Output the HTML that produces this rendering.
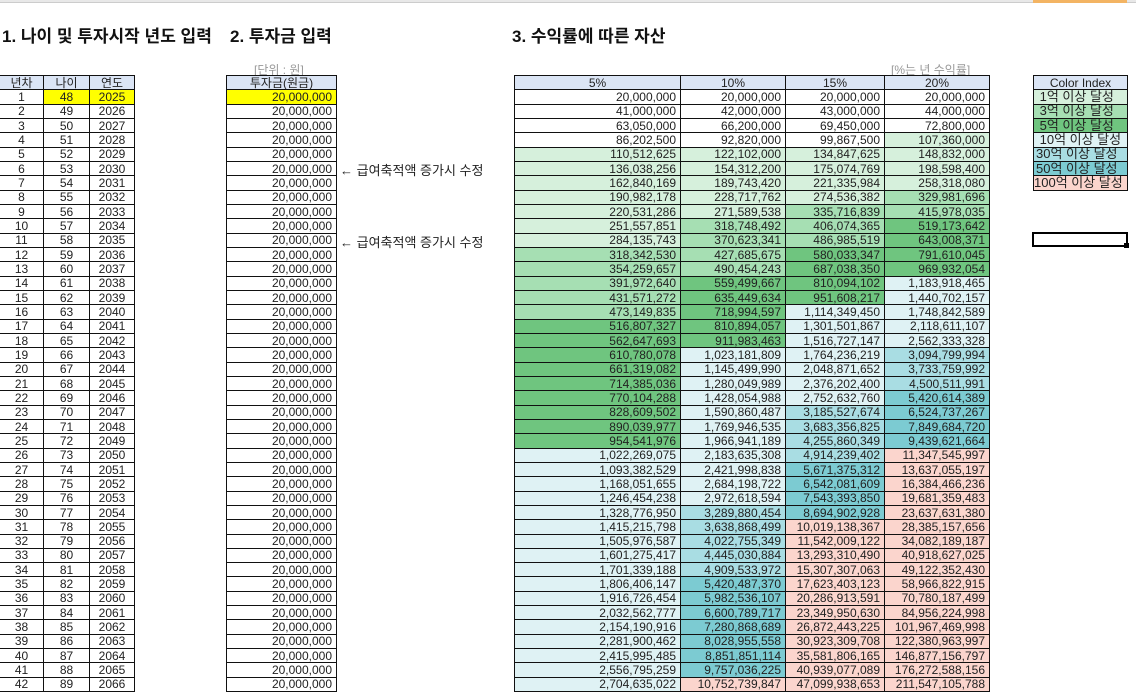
<!DOCTYPE html>
<html><head><meta charset="utf-8"><style>
*{margin:0;padding:0;box-sizing:border-box}
body{width:1136px;height:696px;overflow:hidden;background:#fff;position:relative;font-family:"Liberation Sans","Noto Sans CJK KR","NanumGothic",sans-serif;color:#222}
.t{position:absolute;font-weight:bold;font-size:17px;top:22px;color:#111}
table{position:absolute;border-collapse:collapse;table-layout:fixed;font-size:12px;top:75px}
td{border:1px solid #111;height:14.33px;line-height:12px;padding:0 4px;white-space:nowrap;overflow:hidden;text-align:right}
th{border:1px solid #111;height:14.33px;line-height:12px;font-weight:normal;background:#dbe5f5;text-align:center;padding:0}
.c0 td{text-align:center}
.y{background:#ffff00}
.a{background:#d6f0dc}.b{background:#a6dfb3}.c{background:#6fc57f}
.d{background:#dff2f4}.e{background:#a9dde3}.f{background:#7ccbd2}.r{background:#fbd5cd}
.gray{position:absolute;color:#999;font-size:12px}
.note{position:absolute;left:340px;font-size:13px}
.sel{position:absolute;left:1032px;top:232px;width:96px;height:15px;border:2px solid #000}
.ci td{text-align:left;padding:0 2px;font-size:13px}
.top{position:absolute;top:0;left:0;width:1136px;height:3px;background:#e8e8e8;border-bottom:1px solid #ccc}
</style></head><body>
<div class="top"></div>
<div style="position:absolute;top:0;left:1033px;width:94px;height:3px;background:#f3b463"></div>
<div class="t" style="left:2px">1. 나이 및 투자시작 년도 입력</div>
<div class="t" style="left:228px;background:#fff;padding-left:2px">2. 투자금 입력</div>
<div class="t" style="left:512px">3. 수익률에 따른 자산</div>
<div class="gray" style="left:254px;top:61px">[단위 : 원]</div>
<div class="gray" style="left:891px;top:61px">[%는 년 수익률]</div>
<div class="note" style="top:160px">← 급여축적액 증가시 수정</div>
<div class="note" style="top:232px">← 급여축적액 증가시 수정</div>

<table class="c0" style="left:-1px;width:135px"><col style="width:44px"><col style="width:46px"><col style="width:45px">
<tr><th>년차</th><th>나이</th><th>연도</th></tr>
<tr><td>1</td><td class="y">48</td><td class="y">2025</td></tr>
<tr><td>2</td><td>49</td><td>2026</td></tr><tr><td>3</td><td>50</td><td>2027</td></tr><tr><td>4</td><td>51</td><td>2028</td></tr><tr><td>5</td><td>52</td><td>2029</td></tr><tr><td>6</td><td>53</td><td>2030</td></tr><tr><td>7</td><td>54</td><td>2031</td></tr><tr><td>8</td><td>55</td><td>2032</td></tr><tr><td>9</td><td>56</td><td>2033</td></tr><tr><td>10</td><td>57</td><td>2034</td></tr><tr><td>11</td><td>58</td><td>2035</td></tr><tr><td>12</td><td>59</td><td>2036</td></tr><tr><td>13</td><td>60</td><td>2037</td></tr><tr><td>14</td><td>61</td><td>2038</td></tr><tr><td>15</td><td>62</td><td>2039</td></tr><tr><td>16</td><td>63</td><td>2040</td></tr><tr><td>17</td><td>64</td><td>2041</td></tr><tr><td>18</td><td>65</td><td>2042</td></tr><tr><td>19</td><td>66</td><td>2043</td></tr><tr><td>20</td><td>67</td><td>2044</td></tr><tr><td>21</td><td>68</td><td>2045</td></tr><tr><td>22</td><td>69</td><td>2046</td></tr><tr><td>23</td><td>70</td><td>2047</td></tr><tr><td>24</td><td>71</td><td>2048</td></tr><tr><td>25</td><td>72</td><td>2049</td></tr><tr><td>26</td><td>73</td><td>2050</td></tr><tr><td>27</td><td>74</td><td>2051</td></tr><tr><td>28</td><td>75</td><td>2052</td></tr><tr><td>29</td><td>76</td><td>2053</td></tr><tr><td>30</td><td>77</td><td>2054</td></tr><tr><td>31</td><td>78</td><td>2055</td></tr><tr><td>32</td><td>79</td><td>2056</td></tr><tr><td>33</td><td>80</td><td>2057</td></tr><tr><td>34</td><td>81</td><td>2058</td></tr><tr><td>35</td><td>82</td><td>2059</td></tr><tr><td>36</td><td>83</td><td>2060</td></tr><tr><td>37</td><td>84</td><td>2061</td></tr><tr><td>38</td><td>85</td><td>2062</td></tr><tr><td>39</td><td>86</td><td>2063</td></tr><tr><td>40</td><td>87</td><td>2064</td></tr><tr><td>41</td><td>88</td><td>2065</td></tr><tr><td>42</td><td>89</td><td>2066</td></tr>
</table>

<table style="left:226px;width:110px"><col style="width:110px">
<tr><th>투자금(원금)</th></tr>
<tr><td class="y">20,000,000</td></tr>
<tr><td>20,000,000</td></tr><tr><td>20,000,000</td></tr><tr><td>20,000,000</td></tr><tr><td>20,000,000</td></tr><tr><td>20,000,000</td></tr><tr><td>20,000,000</td></tr><tr><td>20,000,000</td></tr><tr><td>20,000,000</td></tr><tr><td>20,000,000</td></tr><tr><td>20,000,000</td></tr><tr><td>20,000,000</td></tr><tr><td>20,000,000</td></tr><tr><td>20,000,000</td></tr><tr><td>20,000,000</td></tr><tr><td>20,000,000</td></tr><tr><td>20,000,000</td></tr><tr><td>20,000,000</td></tr><tr><td>20,000,000</td></tr><tr><td>20,000,000</td></tr><tr><td>20,000,000</td></tr><tr><td>20,000,000</td></tr><tr><td>20,000,000</td></tr><tr><td>20,000,000</td></tr><tr><td>20,000,000</td></tr><tr><td>20,000,000</td></tr><tr><td>20,000,000</td></tr><tr><td>20,000,000</td></tr><tr><td>20,000,000</td></tr><tr><td>20,000,000</td></tr><tr><td>20,000,000</td></tr><tr><td>20,000,000</td></tr><tr><td>20,000,000</td></tr><tr><td>20,000,000</td></tr><tr><td>20,000,000</td></tr><tr><td>20,000,000</td></tr><tr><td>20,000,000</td></tr><tr><td>20,000,000</td></tr><tr><td>20,000,000</td></tr><tr><td>20,000,000</td></tr><tr><td>20,000,000</td></tr><tr><td>20,000,000</td></tr>
</table>

<table style="left:514px;width:475px"><col style="width:166px"><col style="width:105px"><col style="width:99px"><col style="width:105px">
<tr><th>5%</th><th>10%</th><th>15%</th><th>20%</th></tr>
<tr><td>20,000,000</td><td>20,000,000</td><td>20,000,000</td><td>20,000,000</td></tr>
<tr><td>41,000,000</td><td>42,000,000</td><td>43,000,000</td><td>44,000,000</td></tr>
<tr><td>63,050,000</td><td>66,200,000</td><td>69,450,000</td><td>72,800,000</td></tr>
<tr><td>86,202,500</td><td>92,820,000</td><td>99,867,500</td><td class="a">107,360,000</td></tr>
<tr><td class="a">110,512,625</td><td class="a">122,102,000</td><td class="a">134,847,625</td><td class="a">148,832,000</td></tr>
<tr><td class="a">136,038,256</td><td class="a">154,312,200</td><td class="a">175,074,769</td><td class="a">198,598,400</td></tr>
<tr><td class="a">162,840,169</td><td class="a">189,743,420</td><td class="a">221,335,984</td><td class="a">258,318,080</td></tr>
<tr><td class="a">190,982,178</td><td class="a">228,717,762</td><td class="a">274,536,382</td><td class="b">329,981,696</td></tr>
<tr><td class="a">220,531,286</td><td class="a">271,589,538</td><td class="b">335,716,839</td><td class="b">415,978,035</td></tr>
<tr><td class="a">251,557,851</td><td class="b">318,748,492</td><td class="b">406,074,365</td><td class="c">519,173,642</td></tr>
<tr><td class="a">284,135,743</td><td class="b">370,623,341</td><td class="b">486,985,519</td><td class="c">643,008,371</td></tr>
<tr><td class="b">318,342,530</td><td class="b">427,685,675</td><td class="c">580,033,347</td><td class="c">791,610,045</td></tr>
<tr><td class="b">354,259,657</td><td class="b">490,454,243</td><td class="c">687,038,350</td><td class="c">969,932,054</td></tr>
<tr><td class="b">391,972,640</td><td class="c">559,499,667</td><td class="c">810,094,102</td><td class="d">1,183,918,465</td></tr>
<tr><td class="b">431,571,272</td><td class="c">635,449,634</td><td class="c">951,608,217</td><td class="d">1,440,702,157</td></tr>
<tr><td class="b">473,149,835</td><td class="c">718,994,597</td><td class="d">1,114,349,450</td><td class="d">1,748,842,589</td></tr>
<tr><td class="c">516,807,327</td><td class="c">810,894,057</td><td class="d">1,301,501,867</td><td class="d">2,118,611,107</td></tr>
<tr><td class="c">562,647,693</td><td class="c">911,983,463</td><td class="d">1,516,727,147</td><td class="d">2,562,333,328</td></tr>
<tr><td class="c">610,780,078</td><td class="d">1,023,181,809</td><td class="d">1,764,236,219</td><td class="e">3,094,799,994</td></tr>
<tr><td class="c">661,319,082</td><td class="d">1,145,499,990</td><td class="d">2,048,871,652</td><td class="e">3,733,759,992</td></tr>
<tr><td class="c">714,385,036</td><td class="d">1,280,049,989</td><td class="d">2,376,202,400</td><td class="e">4,500,511,991</td></tr>
<tr><td class="c">770,104,288</td><td class="d">1,428,054,988</td><td class="d">2,752,632,760</td><td class="f">5,420,614,389</td></tr>
<tr><td class="c">828,609,502</td><td class="d">1,590,860,487</td><td class="e">3,185,527,674</td><td class="f">6,524,737,267</td></tr>
<tr><td class="c">890,039,977</td><td class="d">1,769,946,535</td><td class="e">3,683,356,825</td><td class="f">7,849,684,720</td></tr>
<tr><td class="c">954,541,976</td><td class="d">1,966,941,189</td><td class="e">4,255,860,349</td><td class="f">9,439,621,664</td></tr>
<tr><td class="d">1,022,269,075</td><td class="d">2,183,635,308</td><td class="e">4,914,239,402</td><td class="r">11,347,545,997</td></tr>
<tr><td class="d">1,093,382,529</td><td class="d">2,421,998,838</td><td class="f">5,671,375,312</td><td class="r">13,637,055,197</td></tr>
<tr><td class="d">1,168,051,655</td><td class="d">2,684,198,722</td><td class="f">6,542,081,609</td><td class="r">16,384,466,236</td></tr>
<tr><td class="d">1,246,454,238</td><td class="d">2,972,618,594</td><td class="f">7,543,393,850</td><td class="r">19,681,359,483</td></tr>
<tr><td class="d">1,328,776,950</td><td class="e">3,289,880,454</td><td class="f">8,694,902,928</td><td class="r">23,637,631,380</td></tr>
<tr><td class="d">1,415,215,798</td><td class="e">3,638,868,499</td><td class="r">10,019,138,367</td><td class="r">28,385,157,656</td></tr>
<tr><td class="d">1,505,976,587</td><td class="e">4,022,755,349</td><td class="r">11,542,009,122</td><td class="r">34,082,189,187</td></tr>
<tr><td class="d">1,601,275,417</td><td class="e">4,445,030,884</td><td class="r">13,293,310,490</td><td class="r">40,918,627,025</td></tr>
<tr><td class="d">1,701,339,188</td><td class="e">4,909,533,972</td><td class="r">15,307,307,063</td><td class="r">49,122,352,430</td></tr>
<tr><td class="d">1,806,406,147</td><td class="f">5,420,487,370</td><td class="r">17,623,403,123</td><td class="r">58,966,822,915</td></tr>
<tr><td class="d">1,916,726,454</td><td class="f">5,982,536,107</td><td class="r">20,286,913,591</td><td class="r">70,780,187,499</td></tr>
<tr><td class="d">2,032,562,777</td><td class="f">6,600,789,717</td><td class="r">23,349,950,630</td><td class="r">84,956,224,998</td></tr>
<tr><td class="d">2,154,190,916</td><td class="f">7,280,868,689</td><td class="r">26,872,443,225</td><td class="r">101,967,469,998</td></tr>
<tr><td class="d">2,281,900,462</td><td class="f">8,028,955,558</td><td class="r">30,923,309,708</td><td class="r">122,380,963,997</td></tr>
<tr><td class="d">2,415,995,485</td><td class="f">8,851,851,114</td><td class="r">35,581,806,165</td><td class="r">146,877,156,797</td></tr>
<tr><td class="d">2,556,795,259</td><td class="f">9,757,036,225</td><td class="r">40,939,077,089</td><td class="r">176,272,588,156</td></tr>
<tr><td class="d">2,704,635,022</td><td class="r">10,752,739,847</td><td class="r">47,099,938,653</td><td class="r">211,547,105,788</td></tr>
</table>

<table class="ci" style="left:1033px;width:94px"><col style="width:94px">
<tr><th>Color Index</th></tr>
<tr><td class="a">&nbsp;1억 이상 달성</td></tr>
<tr><td class="b">&nbsp;3억 이상 달성</td></tr>
<tr><td class="c">&nbsp;5억 이상 달성</td></tr>
<tr><td class="d">&nbsp;10억 이상 달성</td></tr>
<tr><td class="e">30억 이상 달성</td></tr>
<tr><td class="f">50억 이상 달성</td></tr>
<tr><td class="r" style="padding:0">100억 이상 달성</td></tr>
</table>
<div class="sel"></div>
<div style="position:absolute;left:1124px;top:243px;width:5px;height:5px;background:#000"></div>
</body></html>
